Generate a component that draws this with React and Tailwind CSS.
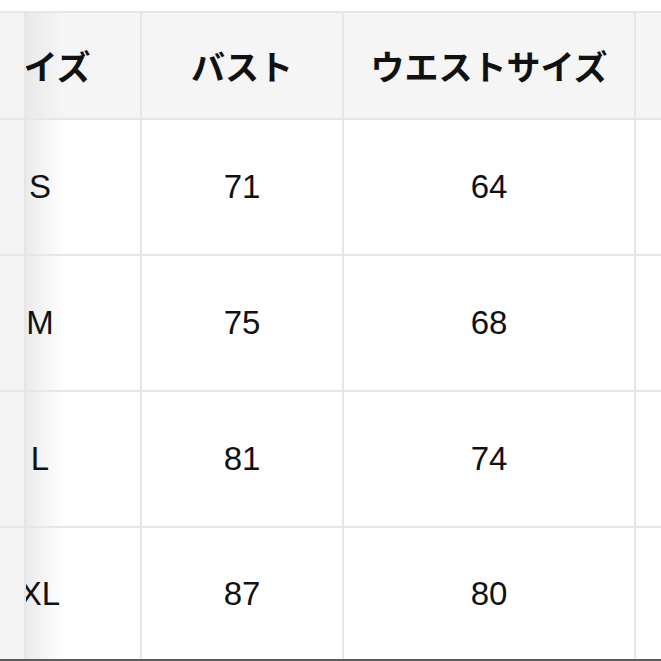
const rows = [
  { size: 'S', bust: '71', waist: '64' },
  { size: 'M', bust: '75', waist: '68' },
  { size: 'L', bust: '81', waist: '74' },
  { size: 'XL', bust: '87', waist: '80' },
];

const jp = { fontFamily: '"Noto Sans CJK JP", "Noto Sans", sans-serif' };
const num = { fontFamily: '"Liberation Sans", Arial, sans-serif' };

const Row = ({ header, last, children }) => (
  <div
    className={`grid grid-cols-[26px_116px_202px_292px_1fr] ${
      header ? 'h-[107px] bg-[#f5f5f5]' : last ? 'h-[131px] bg-white' : 'h-[136px] bg-white'
    } ${last ? '' : 'border-b-2 border-[#e6e6e6]'}`}
  >
    {children}
  </div>
);

const Cell = ({ className = '', children }) => (
  <div className={`flex items-center justify-center border-r-2 border-[#e6e6e6] ${className}`}>
    {children}
  </div>
);

// first data column is scrolled under the sticky strip, so its text is clipped on the left
const SizeCell = ({ header, children }) => (
  <div
    className={`flex items-center overflow-hidden border-r-2 border-[#e6e6e6] ${
      header
        ? 'bg-[linear-gradient(to_right,#e9e9e9,#f5f5f5_36px)]'
        : 'bg-[linear-gradient(to_right,#ebebeb,#ffffff_38px)]'
    }`}
  >
    <div className="w-[200px] shrink-0 -ml-[86px] text-center">{children}</div>
  </div>
);

export default function App() {
  return (
    <div className="w-[661px] h-[661px] bg-white pt-[11px] overflow-hidden text-[#111]">
      <div className="border-t-2 border-[#e6e6e6]">
        <Row header>
          <Cell className="bg-[#f3f3f3]" />
          <SizeCell header>
            <span style={jp} className="text-[34px] font-bold">サイズ</span>
          </SizeCell>
          <Cell>
            <span style={jp} className="text-[34px] font-bold">バスト</span>
          </Cell>
          <Cell>
            <span style={jp} className="text-[34px] font-bold">ウエストサイズ</span>
          </Cell>
          <div />
        </Row>
        {rows.map((r, i) => (
          <Row key={r.size} last={i === rows.length - 1}>
            <Cell className="bg-[#f4f4f4]" />
            <SizeCell>
              <span style={num} className="text-[33px]">{r.size}</span>
            </SizeCell>
            <Cell>
              <span style={num} className="text-[33px]">{r.bust}</span>
            </Cell>
            <Cell>
              <span style={num} className="text-[33px]">{r.waist}</span>
            </Cell>
            <div />
          </Row>
        ))}
        <div className="h-[2px] bg-[#5c5c5c]" />
      </div>
    </div>
  );
}
